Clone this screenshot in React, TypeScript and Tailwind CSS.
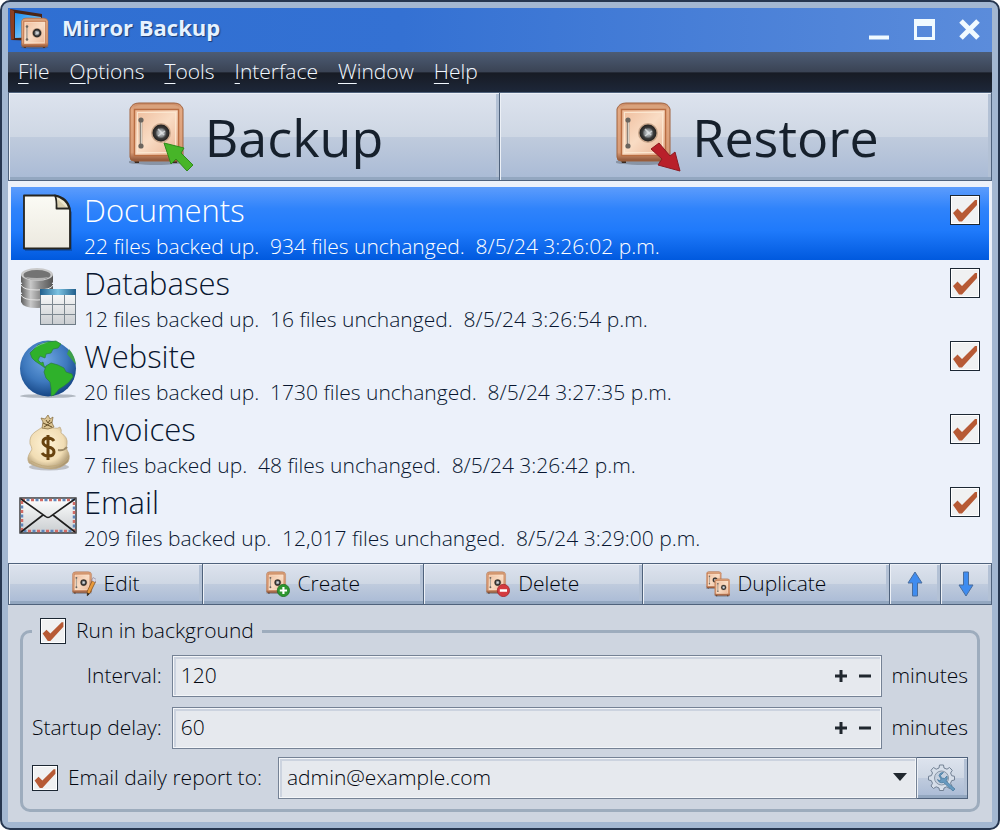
import { useState } from "react";
import type { ReactNode } from "react";
import clsx from "clsx";

type Job = {
  name: string;
  status: string;
  icon: ReactNode;
};

const menus = ["File", "Options", "Tools", "Interface", "Window", "Help"];

// Gradients shared by all icons
function IconDefs() {
  return (
    <svg className="absolute h-0 w-0" aria-hidden="true">
      <defs>
        <linearGradient id="body" x1="0" y1="0" x2="0" y2="1">
          <stop offset="0" stopColor="#c98a64" />
          <stop offset="0.12" stopColor="#e3a983" />
          <stop offset="0.85" stopColor="#d89b76" />
          <stop offset="1" stopColor="#8c5235" />
        </linearGradient>
        <linearGradient id="door" x1="0" y1="0" x2="1" y2="1">
          <stop offset="0" stopColor="#eebc9b" />
          <stop offset="0.5" stopColor="#f9dcc4" />
          <stop offset="1" stopColor="#e9b494" />
        </linearGradient>
        <radialGradient id="dial">
          <stop offset="0" stopColor="#d8dcdf" />
          <stop offset="0.45" stopColor="#85898c" />
          <stop offset="0.65" stopColor="#3a3a3a" />
          <stop offset="1" stopColor="#221f1d" />
        </radialGradient>
        <linearGradient id="metal" x1="0" y1="0" x2="1" y2="0">
          <stop offset="0" stopColor="#5d5d5d" />
          <stop offset="0.3" stopColor="#c9c9c9" />
          <stop offset="0.6" stopColor="#8a8a8a" />
          <stop offset="1" stopColor="#555555" />
        </linearGradient>
        <linearGradient id="sheet" x1="0" y1="0" x2="0" y2="1">
          <stop offset="0" stopColor="#ffffff" />
          <stop offset="1" stopColor="#c9cdd0" />
        </linearGradient>
        <linearGradient id="head" x1="0" y1="0" x2="1" y2="0">
          <stop offset="0" stopColor="#215f8c" />
          <stop offset="0.5" stopColor="#7cc3e2" />
          <stop offset="1" stopColor="#215f8c" />
        </linearGradient>
        <radialGradient id="sea" cx="0.45" cy="0.35" r="0.65">
          <stop offset="0" stopColor="#6ea6e2" />
          <stop offset="0.6" stopColor="#3d78bd" />
          <stop offset="1" stopColor="#164685" />
        </radialGradient>
        <radialGradient id="sack" cx="0.45" cy="0.4" r="0.65">
          <stop offset="0" stopColor="#fff3d6" />
          <stop offset="0.65" stopColor="#f1ddb4" />
          <stop offset="1" stopColor="#a89470" />
        </radialGradient>
        <linearGradient id="paper" x1="0" y1="0" x2="0" y2="1">
          <stop offset="0" stopColor="#fbfbf5" />
          <stop offset="1" stopColor="#ece9df" />
        </linearGradient>
        <linearGradient id="sky" x1="0" y1="0" x2="1" y2="1">
          <stop offset="0" stopColor="#1d8ef0" />
          <stop offset="1" stopColor="#9fe0ff" />
        </linearGradient>
      </defs>
    </svg>
  );
}

function SafeShape() {
  return (
    <g>
      <ellipse cx="27" cy="61" rx="28" ry="3" fill="#4a4f5a" opacity="0.4" />
      <path d="M4 57h6v5H6zM43 57h6l-1 5h-4z" fill="#3b2a20" />
      <path d="M1 8Q3 2 10 2H45Q52 2 54 8V56Q54 60 50 60H5Q1 60 1 56Z" fill="url(#body)" stroke="#a0623f" />
      <path d="M4 8Q7 4 12 4H43Q49 4 51 8Z" fill="#d9a27c" />
      <rect x="5.500" y="8.500" width="44" height="46" fill="url(#door)" stroke="#b96d42" strokeWidth="1.500" />
      <rect x="8.500" y="11.500" width="38" height="40" fill="none" stroke="#fbe6cf" />
      <path d="M12 18V46" stroke="#8b837a" strokeWidth="2.500" />
      <path d="M12.500 20V44" stroke="#d8d0c4" />
      <circle cx="12" cy="19" r="2.600" fill="#6b655e" />
      <circle cx="12" cy="45" r="2.600" fill="#6b655e" />
      <circle cx="32" cy="32" r="10" fill="#c8a68b" />
      <circle cx="32" cy="32" r="8.500" fill="url(#dial)" />
      <path d="M29 28L35 34M36 30L29 35" stroke="#e5e8ea" strokeWidth="1.500" opacity="0.7" />
    </g>
  );
}

function SafeIcon({ className, children }: { className: string; children?: ReactNode }) {
  return (
    <svg viewBox="0 0 66 72" className={clsx("shrink-0", className)} aria-hidden="true">
      <SafeShape />
      {children}
    </svg>
  );
}

function AppIcon() {
  return (
    <svg viewBox="0 0 40 40" className="h-10 w-10 shrink-0" aria-hidden="true">
      <path d="M0 0L32 5V32L1 31Z" fill="#4a2415" />
      <path d="M5 4L31 8V28L5 29Z" fill="url(#sky)" />
      <path d="M0 0L4 2V30L1 31Z" fill="#8c3f20" />
      <g transform="translate(11 8) scale(0.500)">
        <SafeShape />
      </g>
    </svg>
  );
}

function DocumentIcon() {
  return (
    <svg viewBox="0 0 60 60" className="h-[60px] w-[60px]" aria-hidden="true">
      <path d="M7 4H39L54 18V57H7Z" fill="#0b2f66" opacity="0.4" />
      <path d="M6 1.500H37Q50 4 52 16V54.500H6Z" fill="url(#paper)" stroke="#26251f" strokeWidth="1.800" strokeLinejoin="round" />
      <path d="M37 1.500Q39 6 38.500 14.500H51.500Q49 5 37 1.500Z" fill="#eee8cf" stroke="#26251f" strokeWidth="1.800" strokeLinejoin="round" />
      <path d="M39.500 5L48 13H40Z" fill="#d9cfae" />
    </svg>
  );
}

function DatabaseIcon() {
  return (
    <svg viewBox="0 0 60 60" className="h-[60px] w-[60px]" aria-hidden="true">
      <path d="M3 27V35Q5 41 19 41T35 35V27Z" fill="url(#metal)" />
      <path d="M3 28Q5 33 19 33T35 28" fill="none" stroke="#e3e3e3" />
      <path d="M3 17V25Q5 31 19 31T35 25V17Z" fill="url(#metal)" />
      <path d="M3 18Q5 23 19 23T35 18" fill="none" stroke="#e3e3e3" />
      <path d="M3 7V15Q5 21 19 21T35 15V7Z" fill="url(#metal)" />
      <ellipse cx="19" cy="7.500" rx="16" ry="6.500" fill="#c9c9c9" />
      <ellipse cx="19" cy="8" rx="13.500" ry="5" fill="#737373" />
      <path d="M7 10Q19 17 31 10Q19 12 7 10Z" fill="#b5b5b5" />
      <rect x="22.500" y="22.500" width="35" height="35" fill="url(#sheet)" stroke="#6f7c86" />
      <rect x="22" y="22" width="36" height="6" fill="url(#head)" />
      <path d="M34.500 28V57M46.500 28V57M23 37.500H57M23 47.500H57" stroke="#7d8890" />
    </svg>
  );
}

function GlobeIcon() {
  return (
    <svg viewBox="0 0 60 60" className="h-[60px] w-[60px]" aria-hidden="true">
      <ellipse cx="30" cy="56" rx="28" ry="2" fill="#8b929b" opacity="0.6" />
      <circle cx="30" cy="28.500" r="28" fill="url(#sea)" />
      <path
        d="M12 13L20 5L29 2L38 1L43 4L40 8L35 9L33 13L28 14L27 18L22 16L20 20L23 23L25 22L26 26L29 28L27 28L23 25L17 21L14 18Z"
        fill="#2fb12b"
        stroke="#2a7d3f"
        strokeWidth="0.700"
      />
      <path
        d="M28 26L33 23L40 25L46 28L48 32L54 34L55 37L51 42L46 46L41 49L36 55L33 56L33 48L32 42L28 38L26 32Z"
        fill="#2fb12b"
        stroke="#2a7d3f"
        strokeWidth="0.700"
      />
      <path d="M51 9Q57 16 58 25L54 20L49 14Z" fill="#3c9f4a" />
      <path d="M8 17Q17 3 31 2Q13 7 8 17Z" fill="#c9e4ff" opacity="0.5" />
    </svg>
  );
}

function MoneyBagIcon() {
  return (
    <svg viewBox="0 0 60 60" className="h-[60px] w-[60px]" aria-hidden="true">
      <ellipse cx="31" cy="54" rx="20" ry="3.500" fill="#777" opacity="0.4" />
      <path
        d="M23 15L35 15Q40 16 42 14Q44 17 43 20Q50 24 49 31Q48 34 49 37Q53 43 50 49Q43 56 33 56Q19 55 11 50Q8 45 13 38Q15 36 12 31Q11 23 17 19Z"
        fill="url(#sack)"
        stroke="#bea87d"
        strokeWidth="0.700"
      />
      <path d="M13 48Q25 55 35 53Q46 52 50 45" fill="none" stroke="#c1aa7c" />
      <path d="M40 37Q46 38 49 34" fill="none" stroke="#9c8966" strokeWidth="2" />
      <path d="M24 15L25 9L23 5L27 6L30 2L32 6L35 4L34 10L36 14L30 16Z" fill="#dbc493" stroke="#8c7446" strokeWidth="0.800" />
      <path d="M25 10L34 14M34 9L26 14M28 7L30 10L32 7" stroke="#665028" fill="none" />
      <path
        d="M36 28Q34 25 30 25Q25 25 25 29Q25 32 30 34Q36 35 36 39Q36 43 30 43Q26 43 24 40M30 22V47"
        fill="none"
        stroke="#68430f"
        strokeWidth="3"
      />
    </svg>
  );
}

function EnvelopeIcon() {
  return (
    <svg viewBox="0 0 60 60" className="h-[60px] w-[60px]" aria-hidden="true">
      <rect x="2" y="12" width="56" height="35" fill="url(#sheet)" stroke="#333" strokeWidth="1.400" />
      <rect x="4" y="14" width="52" height="31" fill="none" stroke="#d26a64" strokeWidth="2.500" strokeDasharray="3 6" />
      <rect x="4" y="14" width="52" height="31" fill="none" stroke="#5f86bb" strokeWidth="2.500" strokeDasharray="3 6" strokeDashoffset="4.500" />
      <path d="M3 13L27 30Q30 33 33 30L57 13M3 46L25 29M57 46L35 29" fill="none" stroke="#1f1f1f" strokeWidth="1.600" />
    </svg>
  );
}

const jobs: Job[] = [
  { name: "Documents", status: "22 files backed up.  934 files unchanged.  8/5/24 3:26:02 p.m.", icon: <DocumentIcon /> },
  { name: "Databases", status: "12 files backed up.  16 files unchanged.  8/5/24 3:26:54 p.m.", icon: <DatabaseIcon /> },
  { name: "Website", status: "20 files backed up.  1730 files unchanged.  8/5/24 3:27:35 p.m.", icon: <GlobeIcon /> },
  { name: "Invoices", status: "7 files backed up.  48 files unchanged.  8/5/24 3:26:42 p.m.", icon: <MoneyBagIcon /> },
  { name: "Email", status: "209 files backed up.  12,017 files unchanged.  8/5/24 3:29:00 p.m.", icon: <EnvelopeIcon /> },
];

function CheckBox({ id, label, className }: { id?: string; label?: string; className: string }) {
  return (
    <span className={clsx("relative block shrink-0", className)}>
      <input
        id={id}
        type="checkbox"
        defaultChecked
        aria-label={label}
        className="peer block h-full w-full appearance-none border border-[#1c2733] bg-[#f0f1f2] shadow-[inset_0_0_0_1px_#ffffff]"
      />
      <svg viewBox="0 0 30 30" className="pointer-events-none absolute inset-0 hidden peer-checked:block" aria-hidden="true">
        <path d="M3 18L7.500 13.500L12 18L25 5H27V10L12 26.500H9Z" fill="#b75a35" />
      </svg>
    </span>
  );
}

const bevel =
  "border-[#4f627c] bg-[linear-gradient(#dde3ee,#ced7e4_50%,#bfcbdd_51%,#a9bad5)] shadow-[inset_1px_1px_0_#edf1f7,inset_0_-3px_0_#93a7c0,inset_-3px_0_0_#b3c1d5]";

function ToolButton({ icon, children }: { icon: ReactNode; children: ReactNode }) {
  return (
    <button className={clsx("flex flex-auto items-center justify-center gap-2 border-y border-r", bevel)}>
      {icon}
      {children}
    </button>
  );
}

const field = "border border-[#758295] bg-[#e6e9ee] shadow-[inset_0_0_0_1px_#f4f6f9,inset_2px_2px_0_1px_#ccd3df]";

function SpinnerRow({ id, label, initial }: { id: string; label: string; initial: number }) {
  const [value, setValue] = useState(initial);
  return (
    <>
      <label htmlFor={id} className="text-right">{label}</label>
      <div className={clsx("flex h-[42px] items-center pr-1", field)}>
        <input
          id={id}
          inputMode="numeric"
          value={value}
          onChange={(e) => setValue(Number(e.target.value) || 0)}
          className="w-0 flex-1 bg-transparent pl-2 outline-none"
        />
        <button aria-label={`Increase ${label}`} onClick={() => setValue(value + 1)} className="flex h-9 w-6 items-center justify-center">
          <svg viewBox="0 0 14 14" className="h-3.5 w-3.5"><path d="M7 1V13M1 7H13" stroke="#20272e" strokeWidth="3" /></svg>
        </button>
        <button aria-label={`Decrease ${label}`} onClick={() => setValue(Math.max(0, value - 1))} className="flex h-9 w-6 items-center justify-center">
          <svg viewBox="0 0 14 14" className="h-3.5 w-3.5"><path d="M1 7H13" stroke="#20272e" strokeWidth="3" /></svg>
        </button>
      </div>
      <span>minutes</span>
    </>
  );
}

export default function App() {
  const [selected, setSelected] = useState(0);

  return (
    <div className="bg-white">
      <IconDefs />
      <div className="flex min-h-screen flex-col rounded-[10px] border-2 border-[#26364f] bg-[#a3b7d1] p-1.5 font-['Open_Sans','Noto_Sans',sans-serif] text-[21px] font-light text-[#02060f]">
        {/* Title bar */}
        <header className="flex h-11 items-center bg-[linear-gradient(90deg,#2f6fd2,#3471d3_40%,#5b8cdb)] pb-0.5 pl-0.5 pr-3">
          <AppIcon />
          <h1 className="ml-3 flex-1 pb-1 text-[22px] font-bold text-[#e6f2ff] [text-shadow:1px_1px_1px_#1a3c78]">Mirror Backup</h1>
          <div className="flex gap-6">
            <button aria-label="Minimize" className="h-[21px] w-[21px]">
              <svg viewBox="0 0 21 21"><path d="M0 18.500H20" stroke="#f0faff" strokeWidth="4" /></svg>
            </button>
            <button aria-label="Maximize" className="h-[21px] w-[21px]">
              <svg viewBox="0 0 21 21"><path d="M0 0H21V21H0ZM3 7V18H18V7Z" fill="#f0faff" fillRule="evenodd" /></svg>
            </button>
            <button aria-label="Close" className="h-[21px] w-[21px]">
              <svg viewBox="0 0 21 21"><path d="M2 2L19 19M19 2L2 19" stroke="#f0faff" strokeWidth="5" /></svg>
            </button>
          </div>
        </header>

        {/* Menu bar */}
        <nav className="flex h-10 items-center gap-5 bg-[linear-gradient(#4d5c74,#3a4354_50%,#171b24_52%,#1d2739)] px-2.5 text-[#f2f8ff]">
          {menus.map((menu) => (
            <a key={menu} href={`#${menu.toLowerCase()}`}>
              <span className="underline decoration-1 underline-offset-4">{menu[0]}</span>
              {menu.slice(1)}
            </a>
          ))}
        </nav>

        {/* Main actions */}
        <div className="grid h-[89px] grid-cols-2 text-[52px] font-normal text-[#16202c]">
          <button className={clsx("flex items-center justify-center gap-2.5 border pl-1", bevel)}>
            <SafeIcon className="h-[72px] w-[66px]">
              <path d="M35 42L55 47L52 52L64 64L58 70L47 58L42 63Z" fill="#47b528" stroke="#2f8a1b" />
            </SafeIcon>
            Backup
          </button>
          <button className={clsx("flex items-center justify-center gap-2.5 border-y border-r pl-1", bevel)}>
            <SafeIcon className="h-[72px] w-[66px]">
              <path d="M43 42L35 48L46 58L42 64L64 70L59 51L54 55Z" fill="#b9202a" stroke="#8d1a22" />
            </SafeIcon>
            Restore
          </button>
        </div>

        {/* Backup jobs */}
        <ul className="flex-1 bg-[#ecf1fa] px-[3px] pt-1.5">
          {jobs.map((job, index) => (
            <li
              key={job.name}
              onClick={() => setSelected(index)}
              className={clsx(
                "flex h-[73px] items-start gap-1.5 pl-[7px] pr-[9px]",
                index === selected
                  ? "bg-[linear-gradient(#5c9cfc,#2f83fb_30%,#1f7afb_60%,#0059de)] text-white"
                  : "text-[#081630]"
              )}
            >
              <div className="pt-[7px]">{job.icon}</div>
              <div className="flex-1">
                <h2 className="text-[31px] leading-[46px]">{job.name}</h2>
                <p className="whitespace-pre leading-[26px]">{job.status}</p>
              </div>
              <CheckBox label={job.name} className="mt-2 h-[30px] w-[30px]" />
            </li>
          ))}
        </ul>

        {/* Job toolbar */}
        <div className="flex h-[42px] border-l border-[#4f627c]">
          <ToolButton
            icon={
              <SafeIcon className="h-[26px] w-6">
                <path d="M58 22L66 28L50 60L42 68L42 56Z" fill="#e89a3c" stroke="#7b4a1a" strokeWidth="2" />
                <path d="M58 18L68 24L64 32L54 26Z" fill="#d9d9e8" stroke="#5d4756" />
                <path d="M42 60L42 70L49 63Z" fill="#222" />
              </SafeIcon>
            }
          >
            Edit
          </ToolButton>
          <ToolButton
            icon={
              <SafeIcon className="h-[26px] w-6">
                <circle cx="48" cy="54" r="17" fill="#2d962f" stroke="#176b1d" strokeWidth="2" />
                <path d="M48 44V64M38 54H58" stroke="#fff" strokeWidth="6" />
              </SafeIcon>
            }
          >
            Create
          </ToolButton>
          <ToolButton
            icon={
              <SafeIcon className="h-[26px] w-6">
                <circle cx="48" cy="54" r="17" fill="#d43b40" stroke="#9c2128" strokeWidth="2" />
                <path d="M38 54H58" stroke="#fff" strokeWidth="7" />
              </SafeIcon>
            }
          >
            Delete
          </ToolButton>
          <ToolButton
            icon={
              <svg viewBox="0 0 66 72" className="h-[26px] w-6 shrink-0" aria-hidden="true">
                <g transform="scale(0.780)"><SafeShape /></g>
                <g transform="translate(23 20) scale(0.800)"><SafeShape /></g>
              </svg>
            }
          >
            Duplicate
          </ToolButton>
          <button aria-label="Move up" className={clsx("flex w-[51px] items-center justify-center border-y border-r", bevel)}>
            <svg viewBox="0 0 16 26" className="h-[26px] w-4">
              <path d="M8 1L15 12H10.500V25H5.500V12H1Z" fill="#3f8cf0" stroke="#4a6d9c" />
            </svg>
          </button>
          <button aria-label="Move down" className={clsx("flex w-[51px] items-center justify-center border-y border-r", bevel)}>
            <svg viewBox="0 0 16 26" className="h-[26px] w-4">
              <path d="M8 25L15 14H10.500V1H5.500V14H1Z" fill="#3f8cf0" stroke="#4a6d9c" />
            </svg>
          </button>
        </div>

        {/* Background settings */}
        <div className="bg-[#ced5e0] px-3 pb-2.5 pt-3">
          <fieldset className="rounded-[10px] border-[3px] border-[#9dacbd] px-[9px] pb-2.5">
            <legend className="flex h-7 items-center gap-2.5 px-2">
              <CheckBox id="background" className="h-[26px] w-[26px]" />
              <label htmlFor="background">Run in background</label>
            </legend>
            <div className="mt-2.5 grid grid-cols-[auto_1fr_auto] items-center gap-x-2.5 gap-y-2.5">
              <SpinnerRow id="interval" label="Interval:" initial={120} />
              <SpinnerRow id="delay" label="Startup delay:" initial={60} />
            </div>
            <div className="mt-2 flex items-center">
              <CheckBox id="report" className="h-[26px] w-[26px]" />
              <label htmlFor="report" className="ml-2.5 mr-4">Email daily report to:</label>
              <div className="relative flex-1">
                <select aria-label="Report address" className={clsx("block h-[42px] w-full appearance-none pl-2 outline-none", field)}>
                  <option>admin@example.com</option>
                </select>
                <svg viewBox="0 0 14 8" className="pointer-events-none absolute right-2.5 top-4 h-2 w-3.5" aria-hidden="true">
                  <path d="M0 0H14L7 8Z" fill="#20272e" />
                </svg>
              </div>
              <button aria-label="Email settings" className={clsx("flex h-[42px] w-[51px] items-center justify-center border-y border-r", bevel)}>
                <svg viewBox="0 0 28 28" className="h-7 w-7" fill="none">
                  <path
                    d="M11.500 1H15.500L16 4L19 5.200L21.500 3.500L24.300 6.300L22.600 9L23.700 11.700L26.500 12.300V16L23.700 16.600L22.500 19.300L24 22L21.500 24.500L18.700 22.800L16 24L15.500 26.500H11.500L11 24L8.200 22.800L5.500 24.500L3 22L4.500 19.300L3.300 16.600L0.500 16V12.300L3.300 11.700L4.500 9L3 6.300L5.500 3.500L8.200 5.200L11 4Z"
                    fill="#d6dee9"
                    stroke="#728194"
                  />
                  <circle cx="13.500" cy="14" r="7" fill="#c5d0df" stroke="#8996a6" />
                  <path d="M15.500 8.500L12.500 11.500L13.500 14L16.500 14.500L19 12Q20 15 18 17L27 25L25 27L15.500 18.500Q11 19.500 9.500 15.500L12 17L13 15L11 11.500Q12 8 15.500 8.500Z" fill="#6799bf" stroke="#437699" strokeWidth="0.700" />
                </svg>
              </button>
            </div>
          </fieldset>
        </div>
      </div>
    </div>
  );
}
